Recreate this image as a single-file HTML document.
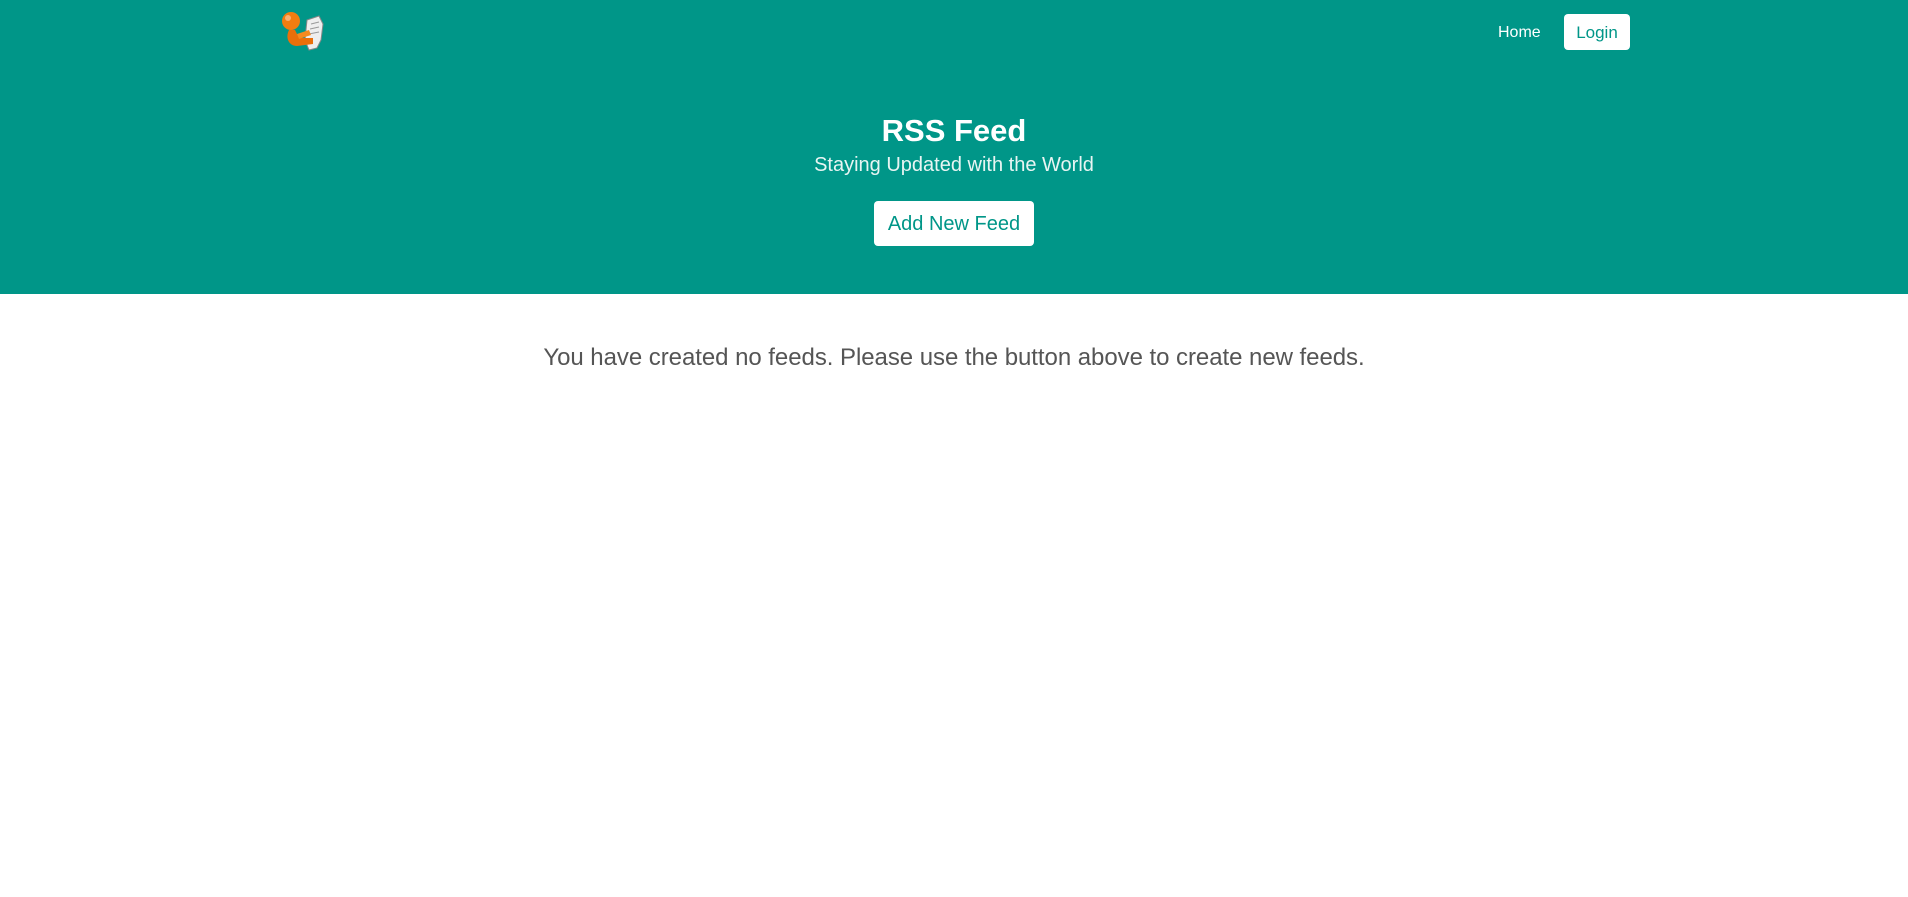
<!DOCTYPE html>
<html><head><meta charset="utf-8"><style>
html,body{margin:0;padding:0;width:1908px;height:897px;background:#fff;font-family:"Liberation Sans",Arial,sans-serif;overflow:hidden}
.hero{position:absolute;left:0;top:0;width:1908px;height:294px;background:#009688}
.logo{position:absolute;left:279px;top:10px;width:48px;height:44px}
.home{position:absolute;left:1498px;top:24px;color:#fff;font-size:16px}
.login{position:absolute;left:1564px;top:14px;width:66px;height:36px;background:#fff;border-radius:4px;color:#009688;font-size:17px;text-align:center;line-height:37px}
h1{position:absolute;left:0;width:1908px;top:111px;margin:0;text-align:center;color:#fff;font-size:31px;font-weight:bold;line-height:40px}
.sub{position:absolute;left:0;width:1908px;top:151px;text-align:center;color:#e8f5f3;font-size:20px;line-height:28px}
.btn{position:absolute;left:874px;top:201px;width:160px;height:45px;background:#fff;border-radius:4px;color:#009688;font-size:20px;text-align:center;line-height:47px}
.msg{position:absolute;left:0;width:1908px;top:342px;text-align:center;color:#555;font-size:24px;line-height:32px;letter-spacing:-0.05px}
</style></head><body>
<div class="hero">
<svg class="logo" viewBox="0 0 48 44">
<path d="M28 10 L40 6 L44 14 L42 30 L38 38 L30 40 L26 30 Z" fill="#eee" stroke="#888" stroke-width="1"/>
<path d="M32 14 L40 12 M31 19 L40 17 M30 24 L40 22" stroke="#999" stroke-width="1"/>
<circle cx="12" cy="11" r="9" fill="#f07d10"/>
<circle cx="9" cy="8" r="3" fill="#f8b070"/>
<path d="M10 20 C6 28 10 36 18 36 L34 34 L34 28 L20 28 L16 20 Z" fill="#ea6f0a"/>
<path d="M18 24 L30 20 L32 25 L20 29 Z" fill="#f58a20"/>
</svg>
<div class="home">Home</div>
<div class="login">Login</div>
<h1>RSS Feed</h1>
<div class="sub">Staying Updated with the World</div>
<div class="btn">Add New Feed</div>
</div>
<div class="msg">You have created no feeds. Please use the button above to create new feeds.</div>
</body></html>
